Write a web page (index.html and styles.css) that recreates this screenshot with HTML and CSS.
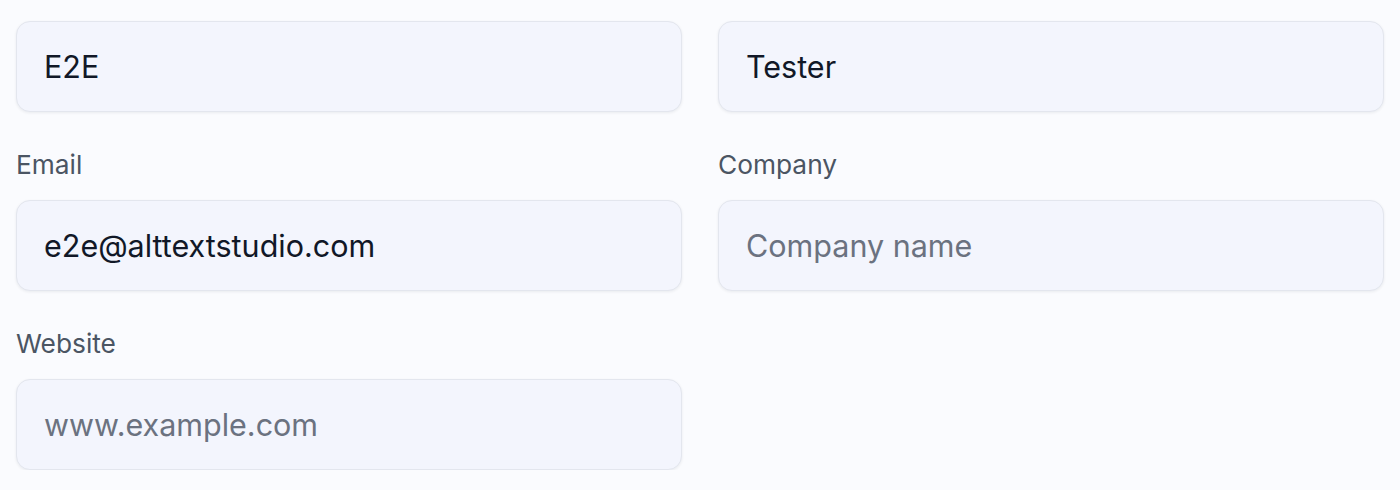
FILE: index.html
```html
<!DOCTYPE html>
<html lang="en">
<head>
<meta charset="utf-8">
<title>Profile form</title>
<link rel="stylesheet" href="styles.css">
</head>
<body>
<form class="form">
  <div class="field">
    <input class="input" type="text" value="E2E" aria-label="First name">
  </div>
  <div class="field">
    <input class="input" type="text" value="Tester" aria-label="Last name">
  </div>
  <div class="field">
    <label class="label" for="email">Email</label>
    <input class="input" id="email" type="email" value="e2e@alttextstudio.com">
  </div>
  <div class="field">
    <label class="label" for="company">Company</label>
    <input class="input" id="company" type="text" placeholder="Company name">
  </div>
  <div class="field">
    <label class="label" for="website">Website</label>
    <input class="input" id="website" type="text" placeholder="www.example.com">
  </div>
</form>
</body>
</html>
```
FILE: styles.css
```css
html, body {
  margin: 0;
  padding: 0;
  background: #fafbfe;
}
body {
  font-family: Inter, "Noto Sans", "Liberation Sans", sans-serif;
  padding: 21px 16px 0 16px;
}
.form {
  display: grid;
  grid-template-columns: 1fr 1fr;
  column-gap: 36px;
  row-gap: 34px;
}
.field {
  display: flex;
  flex-direction: column;
  gap: 17px;
}
.label {
  font-size: 26.3px;
  line-height: 37px;
  color: #4b5563;
}
.input {
  box-sizing: border-box;
  height: 91px;
  width: 100%;
  padding: 0 27px;
  font-family: inherit;
  font-size: 30.5px;
  color: #111827;
  background: #f3f5fd;
  border: 1px solid #e3e6ee;
  border-radius: 14px;
  box-shadow: 0 1px 3px rgba(15, 23, 42, 0.07);
  outline: none;
}
.input::placeholder {
  color: #6b7280;
  opacity: 1;
}
```
